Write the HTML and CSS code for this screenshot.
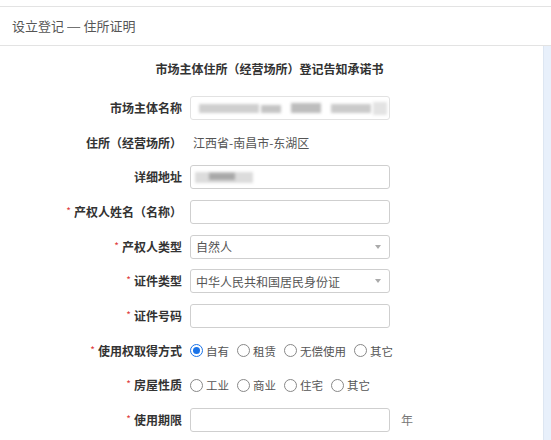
FILE: index.html
```html
<!DOCTYPE html>
<html lang="zh-CN">
<head>
<meta charset="utf-8">
<link rel="stylesheet" href="styles.css">
</head>
<body>
<div class="top-gap"></div>
<header class="page-header">设立登记 <span class="dash">—</span> 住所证明</header>
<div class="main">
  <div class="content">
    <h1 class="doc-title">市场主体住所（经营场所）登记告知承诺书</h1>
    <div class="form">
      <div class="label">市场主体名称</div>
      <div class="field"><div class="input blurred-name"><span class="blur b1"></span><span class="blur b2"></span><span class="blur b3"></span><span class="blur b4"></span><span class="blur b5"></span></div></div>
      <div class="after"></div>

      <div class="label">住所（经营场所）</div>
      <div class="field value-text">江西省-南昌市-东湖区</div>
      <div class="after"></div>

      <div class="label">详细地址</div>
      <div class="field"><div class="input"><span class="blur a1"></span><span class="blur a2"></span></div></div>
      <div class="after"></div>

      <div class="label"><span class="req">*</span>产权人姓名（名称）</div>
      <div class="field"><div class="input"></div></div>
      <div class="after"></div>

      <div class="label"><span class="req">*</span>产权人类型</div>
      <div class="field"><div class="input select"><span class="sel-text">自然人</span><span class="caret"></span></div></div>
      <div class="after"></div>

      <div class="label"><span class="req">*</span>证件类型</div>
      <div class="field"><div class="input select"><span class="sel-text">中华人民共和国居民身份证</span><span class="caret"></span></div></div>
      <div class="after"></div>

      <div class="label"><span class="req">*</span>证件号码</div>
      <div class="field"><div class="input"></div></div>
      <div class="after"></div>

      <div class="label"><span class="req">*</span>使用权取得方式</div>
      <div class="field radios">
        <span class="radio checked"></span><span class="radio-label">自有</span>
        <span class="radio"></span><span class="radio-label">租赁</span>
        <span class="radio"></span><span class="radio-label">无偿使用</span>
        <span class="radio"></span><span class="radio-label">其它</span>
      </div>

      <div class="label"><span class="req">*</span>房屋性质</div>
      <div class="field radios">
        <span class="radio"></span><span class="radio-label">工业</span>
        <span class="radio"></span><span class="radio-label">商业</span>
        <span class="radio"></span><span class="radio-label">住宅</span>
        <span class="radio"></span><span class="radio-label">其它</span>
      </div>

      <div class="label"><span class="req">*</span>使用期限</div>
      <div class="field"><div class="input"></div></div>
      <div class="after unit">年</div>
    </div>
  </div>
  <div class="side-strip"></div>
</div>
</body>
</html>
```
FILE: styles.css
```css
html, body {
  margin: 0;
  padding: 0;
  background: #fff;
}
body {
  font-family: "Noto Sans CJK SC", "Noto Sans", sans-serif;
  font-size: 12px;
  color: #333;
  width: 551px;
  height: 440px;
  overflow: hidden;
}
.top-gap {
  height: 6px;
}
.page-header {
  border-top: 1px solid #e3e3e3;
  border-bottom: 1px solid #e3e3e3;
  height: 38px;
  line-height: 38px;
  padding-left: 12px;
  font-size: 13px;
  color: #555;
}
.dash {
  display: inline-block;
  transform: scaleX(1.25);
  margin: 0 1px;
}
.main {
  display: flex;
  height: 400px;
}
.content {
  width: 543px;
}
.side-strip {
  flex: 1;
  background: #e8f0fb;
  border-left: 1px solid #dde6f2;
}
.doc-title {
  margin: 0;
  padding-top: 14px;
  padding-right: 4px;
  height: 18px;
  line-height: 18px;
  font-size: 12px;
  font-weight: bold;
  text-align: center;
  color: #333;
}
.form {
  display: grid;
  grid-template-columns: 182px 200px auto;
  column-gap: 8px;
  row-gap: 10.67px;
  margin-top: 18px;
}
.label {
  height: 24px;
  line-height: 24px;
  text-align: right;
  font-weight: bold;
  color: #333;
  white-space: nowrap;
}
.req {
  color: #e03a3a;
  font-weight: normal;
  font-size: 10px;
  margin-right: 3px;
  position: relative;
  top: -2px;
}
.field {
  height: 24px;
  display: flex;
  align-items: center;
}
.value-text {
  color: #555;
  padding-left: 3px;
}
.input {
  box-sizing: border-box;
  width: 200px;
  height: 24px;
  border: 1px solid #cfcfcf;
  border-radius: 3px;
  background: #fff;
  position: relative;
  overflow: hidden;
}
.select {
  display: flex;
  align-items: center;
  padding-left: 5px;
  color: #555;
}
.sel-text {
  flex: 1;
}
.caret {
  width: 0;
  height: 0;
  border-left: 3.5px solid transparent;
  border-right: 3.5px solid transparent;
  border-top: 4px solid #aaa;
  margin-right: 8px;
}
.blur {
  position: absolute;
  background: #b8b8b8;
  filter: blur(1.5px);
}
.blurred-name {
  border-color: #e2e2e2;
}
.b1 { left: 8px; top: 7px; width: 60px; height: 9px; background: #cfcfcf; }
.b2 { left: 70px; top: 8px; width: 20px; height: 8px; background: #c4c4c4; }
.b3 { left: 100px; top: 6px; width: 30px; height: 10px; background: #bdbdbd; }
.b4 { left: 140px; top: 7px; width: 40px; height: 9px; background: #cacaca; }
.b5 { left: 182px; top: 5px; width: 14px; height: 13px; background: #e3e3e3; }
.a1 { left: 4px; top: 6px; width: 58px; height: 11px; background: #dcdcdc; }
.a2 { left: 18px; top: 7px; width: 26px; height: 7px; background: #a8a8a8; }
.radios {
  grid-column: span 2;
  color: #555;
  white-space: nowrap;
}
.radio {
  flex-shrink: 0;
  box-sizing: border-box;
  width: 13px;
  height: 13px;
  border: 1px solid #888;
  border-radius: 50%;
  margin-right: 3px;
  background: #fff;
  position: relative;
}
.radio.checked {
  border: 1px solid #1a73e8;
}
.radio.checked::after {
  content: "";
  position: absolute;
  left: 2px;
  top: 2px;
  width: 7px;
  height: 7px;
  border-radius: 50%;
  background: #1a73e8;
}
.radio-label {
  flex-shrink: 0;
  font-size: 11.5px;
  margin-right: 8px;
}
.after {
  height: 24px;
  line-height: 24px;
  color: #777;
  font-size: 12px;
  padding-left: 3px;
}
```
